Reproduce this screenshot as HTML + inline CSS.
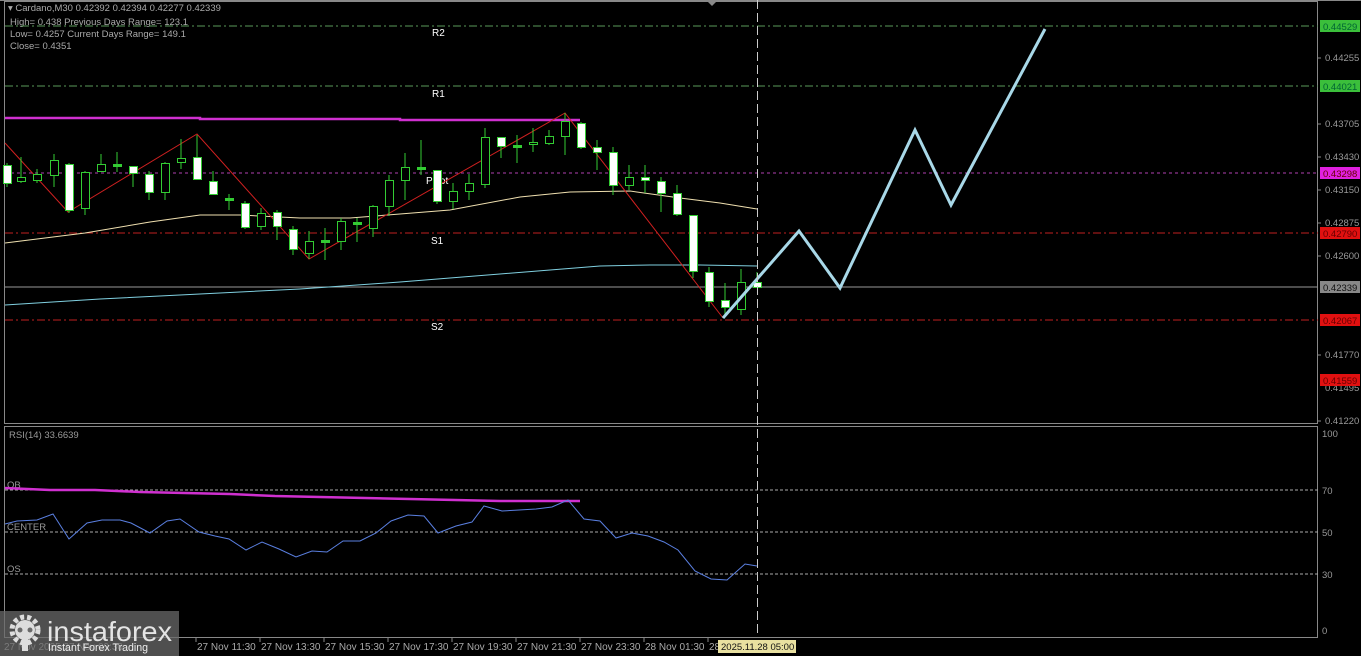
<!DOCTYPE html>
<html><head><meta charset="utf-8"><style>
html,body{margin:0;padding:0;background:#000;width:1361px;height:656px;overflow:hidden}
svg{display:block}
text{font-family:"Liberation Sans",sans-serif}
</style></head><body>
<svg width="1361" height="656" viewBox="0 0 1361 656" xmlns="http://www.w3.org/2000/svg">
<rect width="1361" height="656" fill="#000"/>
<line x1="0" y1="0.5" x2="1361" y2="0.5" stroke="#888"/>
<rect x="4.5" y="1.5" width="1313" height="422" fill="none" stroke="#888"/>
<rect x="4.5" y="426.5" width="1313" height="211" fill="none" stroke="#888"/>
<polygon points="707,1 717,1 712,6" fill="#888"/>
<g fill="#aaa" font-size="9.5">
<text x="8" y="11">▾  Cardano,M30  0.42392 0.42394 0.42277 0.42339</text>
<text x="10" y="25">High= 0.438    Previous Days Range= 123.1</text>
<text x="10" y="37">Low= 0.4257    Current Days Range= 149.1</text>
<text x="10" y="49">Close= 0.4351</text>
</g>
<line x1="5" y1="26" x2="1318" y2="26" stroke="#5a9a5a" stroke-dasharray="8,3,2,3"/>
<line x1="5" y1="86" x2="1318" y2="86" stroke="#5a9a5a" stroke-dasharray="8,3,2,3"/>
<line x1="5" y1="173" x2="1318" y2="173" stroke="#b040b0" stroke-dasharray="3,3"/>
<line x1="5" y1="233" x2="1318" y2="233" stroke="#c02020" stroke-dasharray="8,3,2,3"/>
<line x1="5" y1="287" x2="1318" y2="287" stroke="#999"/>
<line x1="5" y1="320" x2="1318" y2="320" stroke="#c02020" stroke-dasharray="8,3,2,3"/>
<g fill="#fff" font-size="10">
<text x="432" y="36">R2</text><text x="432" y="97">R1</text>
<text x="426" y="184">Pivot</text><text x="431" y="244">S1</text><text x="431" y="330">S2</text>
</g>
<polyline points="5,118 200,118 200,119 400,119 400,120 580,120" fill="none" stroke="#d030d0" stroke-width="2.5"/>
<polyline points="5,243 85,233 150,222 200,215 240,215 300,218 350,218 400,214 450,210 520,197 570,192 630,191 680,198 720,203 757,209" fill="none" stroke="#f0e0b0" stroke-width="1"/>
<polyline points="5,305 100,299 200,294 300,289 400,282 500,274 600,266 650,265 700,265 757,266" fill="none" stroke="#80d0e0" stroke-width="1"/>
<polyline points="5,143 68,212 197,134 309,259 565,113 723,318" fill="none" stroke="#d02020" stroke-width="1"/>
<g stroke="#3c3" stroke-width="1">
<line x1="7" y1="163" x2="7" y2="187"/><rect x="3.5" y="165.5" width="8" height="18" fill="#fff"/>
<line x1="21" y1="157" x2="21" y2="183"/><rect x="17.5" y="177.5" width="8" height="4" fill="#000"/>
<line x1="37" y1="169" x2="37" y2="183"/><rect x="33.5" y="174.5" width="8" height="6" fill="#000"/>
<line x1="54" y1="154" x2="54" y2="187"/><rect x="50.5" y="160.5" width="8" height="15" fill="#000"/>
<line x1="69" y1="163" x2="69" y2="213"/><rect x="65.5" y="164.5" width="8" height="46" fill="#fff"/>
<line x1="85" y1="171" x2="85" y2="215"/><rect x="81.5" y="172.5" width="8" height="36" fill="#000"/>
<line x1="101" y1="154" x2="101" y2="171"/><rect x="97.5" y="164.5" width="8" height="7" fill="#000"/>
<line x1="117" y1="152" x2="117" y2="172"/><rect x="113.5" y="164.5" width="8" height="2" fill="#3c3"/>
<line x1="133" y1="166" x2="133" y2="187"/><rect x="129.5" y="166.5" width="8" height="7" fill="#fff"/>
<line x1="149" y1="171" x2="149" y2="200"/><rect x="145.5" y="174.5" width="8" height="18" fill="#fff"/>
<line x1="165" y1="162" x2="165" y2="200"/><rect x="161.5" y="163.5" width="8" height="29" fill="#000"/>
<line x1="181" y1="139" x2="181" y2="169"/><rect x="177.5" y="158.5" width="8" height="4" fill="#000"/>
<line x1="197" y1="135" x2="197" y2="180"/><rect x="193.5" y="157.5" width="8" height="22" fill="#fff"/>
<line x1="213" y1="171" x2="213" y2="194"/><rect x="209.5" y="181.5" width="8" height="13" fill="#fff"/>
<line x1="229" y1="194" x2="229" y2="210"/><rect x="225.5" y="198.5" width="8" height="2" fill="#3c3"/>
<line x1="245" y1="201" x2="245" y2="229"/><rect x="241.5" y="203.5" width="8" height="24" fill="#fff"/>
<line x1="261" y1="208" x2="261" y2="230"/><rect x="257.5" y="213.5" width="8" height="13" fill="#000"/>
<line x1="277" y1="210" x2="277" y2="240"/><rect x="273.5" y="212.5" width="8" height="14" fill="#fff"/>
<line x1="293" y1="226" x2="293" y2="255"/><rect x="289.5" y="229.5" width="8" height="20" fill="#fff"/>
<line x1="309" y1="231" x2="309" y2="259"/><rect x="305.5" y="241.5" width="8" height="12" fill="#000"/>
<line x1="325" y1="228" x2="325" y2="260"/><rect x="321.5" y="240.5" width="8" height="2" fill="#3c3"/>
<line x1="341" y1="218" x2="341" y2="250"/><rect x="337.5" y="221.5" width="8" height="20" fill="#000"/>
<line x1="357" y1="218" x2="357" y2="242"/><rect x="353.5" y="222.5" width="8" height="2" fill="#3c3"/>
<line x1="373" y1="205" x2="373" y2="237"/><rect x="369.5" y="206.5" width="8" height="22" fill="#000"/>
<line x1="389" y1="175" x2="389" y2="216"/><rect x="385.5" y="180.5" width="8" height="26" fill="#000"/>
<line x1="405" y1="153" x2="405" y2="200"/><rect x="401.5" y="167.5" width="8" height="13" fill="#000"/>
<line x1="421" y1="140" x2="421" y2="175"/><rect x="417.5" y="167.5" width="8" height="2" fill="#3c3"/>
<line x1="437" y1="170" x2="437" y2="204"/><rect x="433.5" y="170.5" width="8" height="31" fill="#fff"/>
<line x1="453" y1="183" x2="453" y2="209"/><rect x="449.5" y="191.5" width="8" height="10" fill="#000"/>
<line x1="469" y1="174" x2="469" y2="200"/><rect x="465.5" y="183.5" width="8" height="8" fill="#000"/>
<line x1="485" y1="128" x2="485" y2="188"/><rect x="481.5" y="137.5" width="8" height="47" fill="#000"/>
<line x1="501" y1="137" x2="501" y2="158"/><rect x="497.5" y="137.5" width="8" height="9" fill="#fff"/>
<line x1="517" y1="135" x2="517" y2="163"/><rect x="513.5" y="145.5" width="8" height="2" fill="#3c3"/>
<line x1="533" y1="128" x2="533" y2="152"/><rect x="529.5" y="142.5" width="8" height="2" fill="#000"/>
<line x1="549" y1="130" x2="549" y2="145"/><rect x="545.5" y="136.5" width="8" height="7" fill="#000"/>
<line x1="565" y1="113" x2="565" y2="155"/><rect x="561.5" y="121.5" width="8" height="15" fill="#000"/>
<line x1="581" y1="122" x2="581" y2="149"/><rect x="577.5" y="123.5" width="8" height="24" fill="#fff"/>
<line x1="597" y1="140" x2="597" y2="170"/><rect x="593.5" y="147.5" width="8" height="5" fill="#fff"/>
<line x1="613" y1="147" x2="613" y2="195"/><rect x="609.5" y="152.5" width="8" height="33" fill="#fff"/>
<line x1="629" y1="165" x2="629" y2="190"/><rect x="625.5" y="177.5" width="8" height="8" fill="#000"/>
<line x1="645" y1="165" x2="645" y2="193"/><rect x="641.5" y="177.5" width="8" height="3" fill="#fff"/>
<line x1="661" y1="177" x2="661" y2="212"/><rect x="657.5" y="181.5" width="8" height="12" fill="#fff"/>
<line x1="677" y1="185" x2="677" y2="216"/><rect x="673.5" y="193.5" width="8" height="21" fill="#fff"/>
<line x1="693" y1="215" x2="693" y2="278"/><rect x="689.5" y="215.5" width="8" height="56" fill="#fff"/>
<line x1="709" y1="267" x2="709" y2="307"/><rect x="705.5" y="272.5" width="8" height="29" fill="#fff"/>
<line x1="725" y1="283" x2="725" y2="315"/><rect x="721.5" y="300.5" width="8" height="7" fill="#fff"/>
<line x1="741" y1="269" x2="741" y2="315"/><rect x="737.5" y="282.5" width="8" height="27" fill="#000"/>
<line x1="757" y1="272" x2="757" y2="287"/><rect x="753.5" y="282.5" width="8" height="5" fill="#fff"/>
</g>
<polyline points="723,318 799,231 840,288 915,130 951,205 1045,29" fill="none" stroke="#a8d8e8" stroke-width="3"/>
<line x1="757.5" y1="0" x2="757.5" y2="637" stroke="#ccc" stroke-dasharray="9,4"/>
<g fill="#999" font-size="9.5">
<text x="1325" y="61">0.44255</text><text x="1325" y="127">0.43705</text>
<text x="1325" y="160">0.43430</text><text x="1325" y="193">0.43150</text>
<text x="1325" y="226">0.42875</text><text x="1325" y="259">0.42600</text>
<text x="1325" y="358">0.41770</text><text x="1325" y="391">0.41495</text>
<text x="1325" y="424">0.41220</text>
<text x="1322" y="437">100</text><text x="1322" y="494">70</text><text x="1322" y="536">50</text>
<text x="1322" y="578">30</text><text x="1322" y="634">0</text>
</g>
<g stroke="#888"><line x1="1318" y1="58" x2="1321" y2="58"/><line x1="1318" y1="124" x2="1321" y2="124"/><line x1="1318" y1="157" x2="1321" y2="157"/><line x1="1318" y1="190" x2="1321" y2="190"/><line x1="1318" y1="223" x2="1321" y2="223"/><line x1="1318" y1="256" x2="1321" y2="256"/><line x1="1318" y1="355" x2="1321" y2="355"/><line x1="1318" y1="421" x2="1321" y2="421"/></g>
<g font-size="9.5">
<rect x="1320" y="20" width="40" height="12" fill="#3bbf3b"/><text x="1323" y="30" fill="#063">0.44529</text>
<rect x="1320" y="80" width="40" height="12" fill="#3bbf3b"/><text x="1323" y="90" fill="#063">0.44021</text>
<rect x="1320" y="167" width="40" height="12" fill="#e020e0"/><text x="1323" y="177" fill="#600">0.43298</text>
<rect x="1320" y="227" width="40" height="12" fill="#e01010"/><text x="1323" y="237" fill="#600">0.42790</text>
<rect x="1320" y="281" width="40" height="12" fill="#888"/><text x="1323" y="291" fill="#111">0.42339</text>
<rect x="1320" y="314" width="40" height="12" fill="#e01010"/><text x="1323" y="324" fill="#600">0.42067</text>
<rect x="1320" y="374" width="40" height="12" fill="#e01010"/><text x="1323" y="384" fill="#600">0.41559</text>
</g>
<g stroke="#aaa" stroke-dasharray="3,2"><line x1="5" y1="490" x2="1318" y2="490"/><line x1="5" y1="532" x2="1318" y2="532"/><line x1="5" y1="574" x2="1318" y2="574"/></g>
<g fill="#999" font-size="9.5"><text x="9" y="438">RSI(14) 33.6639</text><text x="7" y="488">OB</text><text x="7" y="530">CENTER</text><text x="7" y="572">OS</text></g>
<polyline points="5,488 50,490 95,490 140,492 185,493 230,494 275,496 320,497 365,498 410,499 455,500 500,501 545,501 580,501" fill="none" stroke="#d030d0" stroke-width="2.5"/>
<polyline points="5,524 17,521 37,520 53,514 69,539 87,523 102,520 120,520 131,523 150,533 167,521 180,519 199,532 215,536 229,539 246,550 262,542 279,549 296,557 312,551 327,552 343,541 360,541 376,533 391,521 408,515 424,516 438,533 456,526 472,522 484,506 502,511 519,510 536,509 552,507 568,500 584,519 600,521 616,538 632,533 648,536 664,542 678,550 695,571 711,579 727,580 745,564 757,566" fill="none" stroke="#5a7fe0" stroke-width="1"/>
<g stroke="#888"><line x1="196" y1="638" x2="196" y2="642"/><line x1="260" y1="638" x2="260" y2="642"/><line x1="324" y1="638" x2="324" y2="642"/><line x1="388" y1="638" x2="388" y2="642"/><line x1="452" y1="638" x2="452" y2="642"/><line x1="516" y1="638" x2="516" y2="642"/><line x1="580" y1="638" x2="580" y2="642"/><line x1="644" y1="638" x2="644" y2="642"/><line x1="708" y1="638" x2="708" y2="642"/></g>
<g fill="#aaa" font-size="10">
<text x="4" y="650">27 Nov 2025  27 Nov 09:30</text>
<text x="197" y="650">27 Nov 11:30</text><text x="261" y="650">27 Nov 13:30</text>
<text x="325" y="650">27 Nov 15:30</text><text x="389" y="650">27 Nov 17:30</text>
<text x="453" y="650">27 Nov 19:30</text><text x="517" y="650">27 Nov 21:30</text>
<text x="581" y="650">27 Nov 23:30</text><text x="645" y="650">28 Nov 01:30</text>
<text x="709" y="650">28</text>
</g>
<rect x="718" y="640" width="78" height="13" fill="#e8e0a0"/>
<text x="721" y="650" fill="#111" font-size="9.5">2025.11.28 05:00</text>
<rect x="0" y="611" width="179" height="45" fill="#6a6a6a" fill-opacity="0.75"/>
<g fill="#ddd">
<circle cx="25" cy="630" r="13" fill="none" stroke="#ddd" stroke-width="5" stroke-dasharray="4,3"/>
<circle cx="25" cy="630" r="10"/>
<circle cx="20" cy="630" r="2.5" fill="#6a6a6a"/><circle cx="30" cy="630" r="2.5" fill="#6a6a6a"/>
<rect x="22" y="633" width="6" height="18" fill="#ddd"/>
</g>
<text x="47" y="641" fill="#e4e4e4" font-size="28" textLength="125" lengthAdjust="spacingAndGlyphs">instaforex</text>
<text x="48" y="651" fill="#eee" font-size="11" textLength="100" lengthAdjust="spacingAndGlyphs">Instant Forex Trading</text>
</svg>
</body></html>
